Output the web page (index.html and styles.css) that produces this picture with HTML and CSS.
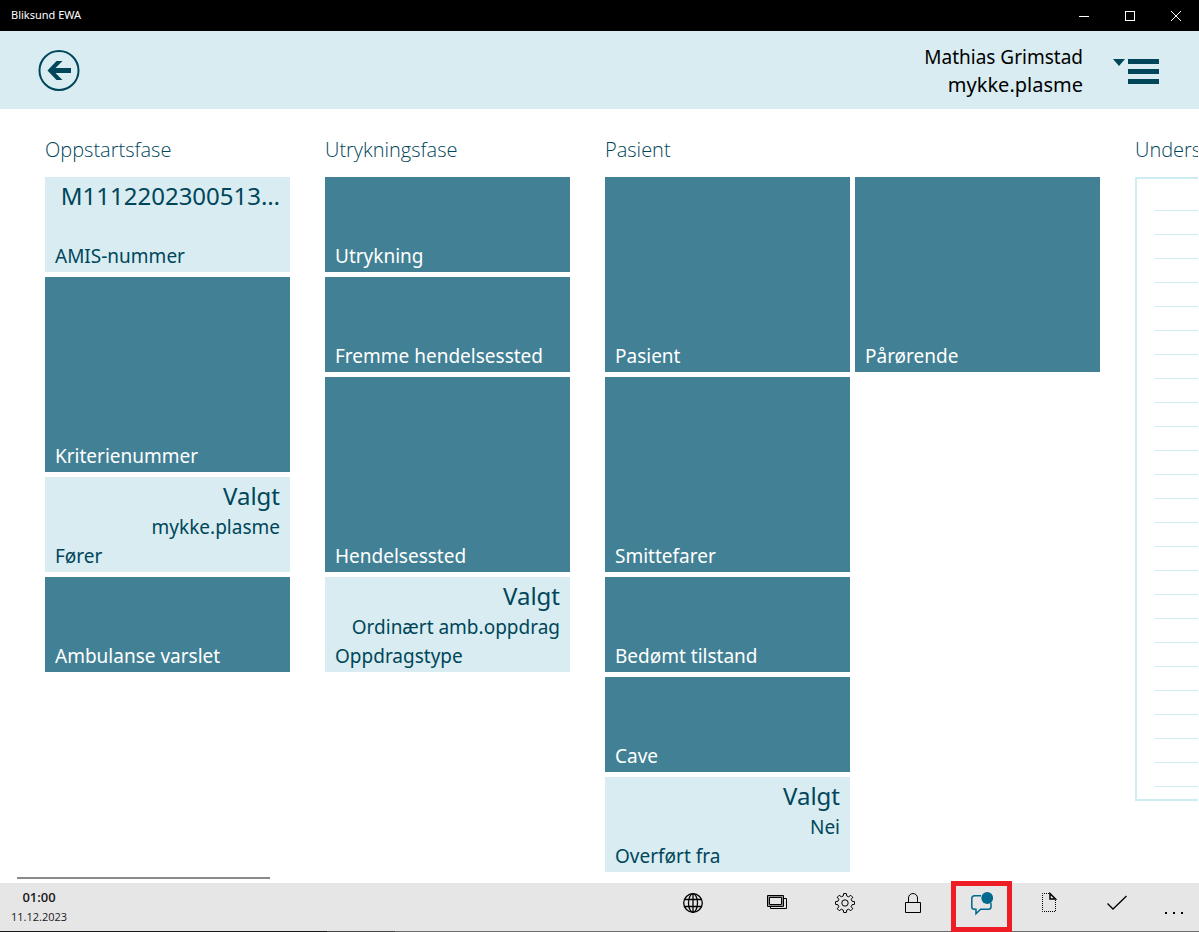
FILE: index.html
```html
<!DOCTYPE html>
<html lang="nb">
<head>
<meta charset="utf-8">
<meta name="viewport" content="width=device-width, initial-scale=1">
<title>Bliksund EWA</title>
<link rel="stylesheet" href="styles.css">
</head>
<body>
<div class="titlebar">
  <span class="titlebar-name">Bliksund EWA</span>
  <div class="window-controls">
    <button type="button" aria-label="Minimer"><svg width="12" height="12" viewBox="0 0 12 12" shape-rendering="crispEdges"><path d="M1 6.500h10"/></svg></button>
    <button type="button" aria-label="Maksimer"><svg width="12" height="12" viewBox="0 0 12 12" shape-rendering="crispEdges"><path d="M1.500 1.500h9v9h-9z"/></svg></button>
    <button type="button" aria-label="Lukk"><svg width="12" height="12" viewBox="0 0 12 12"><path d="M1 1l10 10M11 1L1 11"/></svg></button>
  </div>
</div>
<header class="header">
  <button class="back" type="button" aria-label="Tilbake">
    <svg width="42" height="42" viewBox="0 0 42 42"><circle cx="21" cy="20.500" r="19.500" fill="none" stroke="#00465a" stroke-width="2"/><path fill="#00465a" d="M9.500 20.500l9-9.500h6l-7 7H33v5H17.500l7 7h-6z"/></svg>
  </button>
  <div class="user"><div>Mathias Grimstad</div><div class="user-login">mykke.plasme</div></div>
  <button class="menu" type="button" aria-label="Meny">
    <svg width="46" height="26" viewBox="0 0 46 26" fill="#00465a"><path d="M0 0h12L6 7zM15 0h31v5H15zM15 10h31v5H15zM15 20h31v5H15z"/></svg>
  </button>
</header>
<main class="phases">
  <section class="phase">
    <h2>Oppstartsfase</h2>
    <div class="tiles">
      <button class="tile filled" type="button"><span class="value">M1112202300513…</span><span class="label">AMIS-nummer</span></button>
      <button class="tile tall" type="button"><span class="label">Kriterienummer</span></button>
      <button class="tile filled" type="button"><span class="value">Valgt</span><span class="detail">mykke.plasme</span><span class="label">Fører</span></button>
      <button class="tile" type="button"><span class="label">Ambulanse varslet</span></button>
    </div>
  </section>
  <section class="phase">
    <h2>Utrykningsfase</h2>
    <div class="tiles">
      <button class="tile" type="button"><span class="label">Utrykning</span></button>
      <button class="tile" type="button"><span class="label">Fremme hendelsessted</span></button>
      <button class="tile tall" type="button"><span class="label">Hendelsessted</span></button>
      <button class="tile filled" type="button"><span class="value">Valgt</span><span class="detail">Ordinært amb.oppdrag</span><span class="label">Oppdragstype</span></button>
    </div>
  </section>
  <section class="phase">
    <h2>Pasient</h2>
    <div class="columns">
      <div class="tiles">
        <button class="tile tall" type="button"><span class="label">Pasient</span></button>
        <button class="tile tall" type="button"><span class="label">Smittefarer</span></button>
        <button class="tile" type="button"><span class="label">Bedømt tilstand</span></button>
        <button class="tile" type="button"><span class="label">Cave</span></button>
        <button class="tile filled" type="button"><span class="value">Valgt</span><span class="detail">Nei</span><span class="label">Overført fra</span></button>
      </div>
      <div class="tiles">
        <button class="tile tall" type="button"><span class="label">Pårørende</span></button>
      </div>
    </div>
  </section>
  <section class="phase">
    <h2>Unders</h2>
    <div class="sheet"><div class="sheet-lines"></div></div>
  </section>
</main>
<div class="scroll-track"><div class="scroll-thumb"></div></div>
<footer class="appbar">
  <div class="clock"><strong>01:00</strong><span>11.12.2023</span></div>
  <div class="actions">
    <button class="action language" type="button" aria-label="Språk"><svg width="22" height="22" viewBox="0 0 22 22"><circle cx="11" cy="11" r="9.300"/><ellipse cx="11" cy="11" rx="4.500" ry="9.300"/><path d="M11 1.500v19M2.500 7.500h17M2.500 14.500h17"/></svg></button>
    <button class="action" type="button" aria-label="Vinduer"><svg width="22" height="22" viewBox="0 0 22 22"><path stroke="#888" d="M2.500 4.500h14v9h-14z"/><path d="M1.500 3.500h16v11h-16zM3.500 5.500h12v7h-12zM18 6.500h2.500v10h-16V15"/></svg></button>
    <button class="action" type="button" aria-label="Innstillinger"><svg width="22" height="22" viewBox="0 0 22 22"><circle cx="11" cy="11" r="3.200"/><path d="M9.700 1.500h2.600l.5 2.500 1.800.8 2.200-1.500 1.900 1.900-1.500 2.200.8 1.800 2.500.5v2.600l-2.500.5-.8 1.800 1.500 2.200-1.900 1.900-2.200-1.500-1.800.8-.5 2.500H9.700l-.5-2.500-1.800-.8-2.200 1.500-1.900-1.900 1.500-2.200-.8-1.800-2.500-.5V9.700L4 9.200l.8-1.800-1.500-2.200 1.900-1.900 2.200 1.500L9.200 4z"/></svg></button>
    <button class="action" type="button" aria-label="Lås"><svg width="22" height="22" viewBox="0 0 22 22"><path d="M3.500 10.500h15v10h-15zM6.500 10.500V6a4.500 4.500 0 0 1 9 0v4.500"/></svg></button>
    <button class="action chat" type="button" aria-label="Meldinger"><svg width="24" height="24" viewBox="0 0 24 24"><path d="M12 3.800H5.500Q2.800 3.800 2.800 6.500v8.500Q2.800 17.200 5.500 17.200H7v4.600l4.600-4.600h8Q22 17.200 22 15V11"/><circle cx="18.200" cy="6" r="5.900"/></svg></button>
    <button class="action" type="button" aria-label="Nytt dokument"><svg width="22" height="22" viewBox="0 0 22 22"><path stroke-dasharray="1 1" d="M11 1.500H4.500v18h13V7"/><path stroke-width="1.500" d="M12 1.500v5.500h5.500z"/></svg></button>
    <button class="action check" type="button" aria-label="Godkjenn"><svg width="22" height="22" viewBox="0 0 22 22"><path d="M1.500 11.500l5.500 5.500L20.500 4"/></svg></button>
    <button class="action more" type="button" aria-label="Mer"><svg width="22" height="22" viewBox="0 0 22 22"><path d="M1 12h2v2H1zM9 12h2v2H9zM17 12h2v2h-2z"/></svg></button>
  </div>
</footer>
</body>
</html>
```
FILE: styles.css
```css
* { box-sizing: border-box; }

body {
  margin: 0;
  min-height: 100vh;
  display: flex;
  flex-direction: column;
  background: #fff;
  color: #00465a;
  font-family: "Noto Sans", "Open Sans", sans-serif;
  overflow-x: hidden;
}

button {
  margin: 0;
  padding: 0;
  border: 0;
  background: none;
  color: inherit;
  font: inherit;
  text-align: left;
}

svg { display: block; }

.titlebar {
  display: flex;
  align-items: center;
  justify-content: space-between;
  height: 31px;
  padding-left: 11px;
  background: #000;
  color: #fff;
  font-size: 11px;
}

.titlebar-name { line-height: 14px; padding-bottom: 2px; }

.window-controls { display: flex; }

.window-controls button {
  display: grid;
  place-items: center;
  width: 46px;
  height: 31px;
}

.window-controls svg { fill: none; stroke: #fff; }

.header {
  display: flex;
  align-items: center;
  height: 78px;
  padding: 2px 40px 0 38px;
  background: #d8ecf1;
}

.user {
  margin-left: auto;
  color: #000;
  font-size: 19px;
  line-height: 28px;
  text-align: right;
}

.user-login { font-size: 20px; }

.menu { margin-left: 30px; padding-top: 2px; }

.phases {
  flex: 1;
  display: flex;
  gap: 35px;
  margin-right: 1px;
  padding: 25px 0 5px 45px;
  overflow: hidden;
}

.phase { flex: none; }

.phase h2 {
  margin: 0 0 11px;
  font-family: "Open Sans", sans-serif;
  font-size: 20px;
  font-weight: 300;
  line-height: 32px;
}

.columns { display: flex; gap: 5px; }

.tiles {
  display: flex;
  flex-direction: column;
  gap: 5px;
  width: 245px;
}

.tile {
  display: flex;
  flex-direction: column;
  height: 95px;
  padding: 2px 10px;
  background: #428195;
  color: #fff;
  font-size: 19px;
  line-height: 28px;
}

.tile.tall { height: 195px; }

.tile.filled { background: #d8ecf1; color: #00465a; }

.value {
  align-self: flex-end;
  font-size: 24px;
  line-height: 34px;
}

.detail { align-self: flex-end; }

.label { margin-top: auto; }

.sheet {
  width: 600px;
  padding: 31px 18px 12px;
  border: 2px solid #cdedf2;
}

.sheet-lines {
  height: 577px;
  background: repeating-linear-gradient(#cdedf2 0 1px, transparent 1px 24px);
}

.scroll-track { padding: 0 17px 4px; }

.scroll-thumb {
  width: 253px;
  height: 2px;
  background: #8a8a8a;
}

.appbar {
  display: flex;
  justify-content: space-between;
  height: 49px;
  background:
    linear-gradient(90deg, #1a1a1a 0 327px, #444 327px 395px, #6b6b6b 395px) bottom / 100% 1px no-repeat,
    #e6e6e6;
  color: #1a1a1a;
}

.clock {
  display: flex;
  flex-direction: column;
  align-items: center;
  padding: 4px 0 0 11px;
  font-family: "Open Sans", sans-serif;
  font-size: 11px;
  line-height: 20px;
}

.clock strong { font-weight: 600; font-size: 13px; }

.actions { display: flex; }

.action {
  display: flex;
  justify-content: center;
  width: 68px;
  padding-top: 9px;
}

.action svg { fill: none; stroke: #000; stroke-width: 1; }

.action.language svg,
.action.check svg { stroke-width: 1.3; }

.language { margin-right: 16px; }

.chat { position: relative; }

.action.chat svg { stroke: #00698c; stroke-width: 1.5; }

.action.chat circle { fill: #00698c; stroke: none; }

.chat::after {
  content: "";
  position: absolute;
  inset: -2px 3px 0 4px;
  border: 5px solid #ee1c25;
}

.action.more { width: 48px; padding-top: 17px; }

.action.more svg { fill: #000; stroke: none; }
```
